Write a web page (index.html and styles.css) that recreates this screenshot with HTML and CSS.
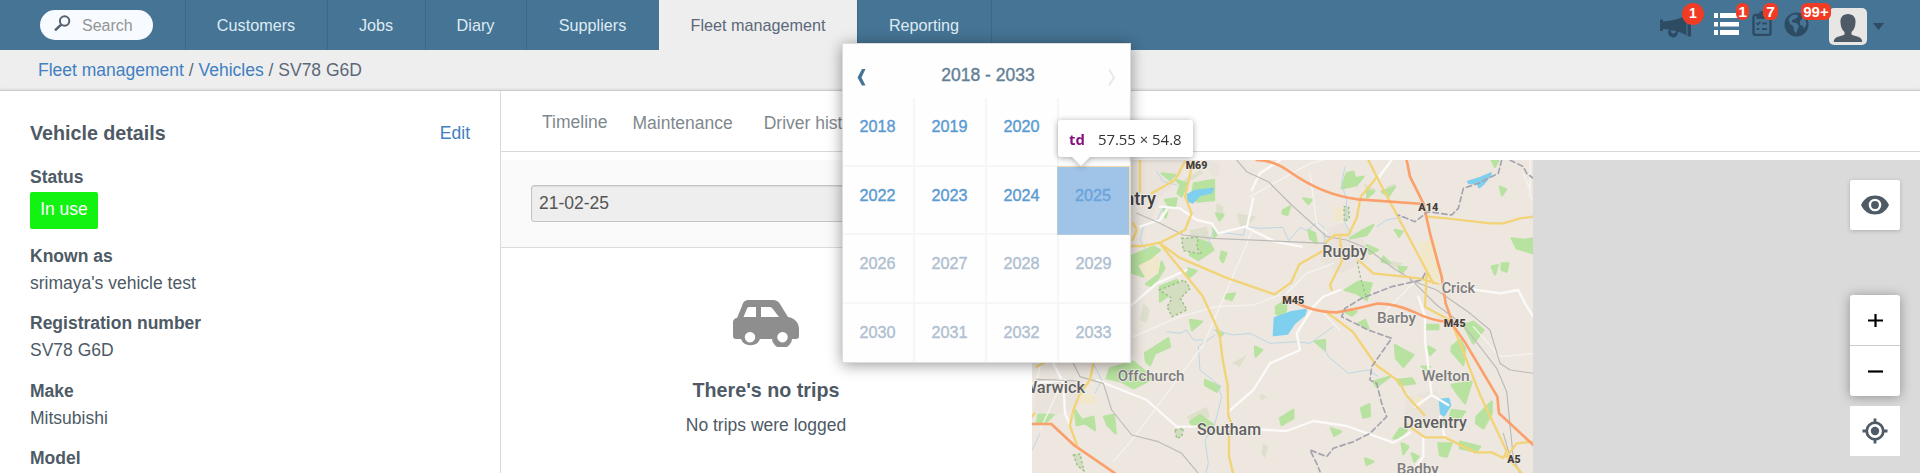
FILE: index.html
```html
<!DOCTYPE html>
<html lang="en">
<head>
<meta charset="utf-8">
<title>Vehicle SV78 G6D</title>
<link rel="stylesheet" href="styles.css">
</head>
<body>
<header class="topbar">
  <div class="search-wrap">
    <div class="search">
      <svg class="search-icon" viewBox="0 0 17 17"><circle cx="10.6" cy="6" r="4.7" fill="none" stroke="#56616f" stroke-width="2"/><path d="M7.2 9.6L1 15.4" stroke="#56616f" stroke-width="2.6"/></svg>
      <span>Search</span>
    </div>
  </div>
  <nav class="nav">
    <a class="nav-item n-customers">Customers</a>
    <a class="nav-item n-jobs">Jobs</a>
    <a class="nav-item n-diary">Diary</a>
    <a class="nav-item n-suppliers">Suppliers</a>
    <a class="nav-item n-fleet active">Fleet management</a>
    <a class="nav-item n-reporting">Reporting</a>
  </nav>
  <div class="tools">
    <span class="tool t-horn">
      <svg width="32" height="24" viewBox="0 0 32 24" fill="#2d4c64"><path d="M0 5.500h3v2C12 7 20 5 26.500 1v20.500C23 19.500 20 18.200 18 17.800a5 5 0 1 1-9-2.300L3 15v2H0zM27.500 1h3.500v21.500h-3.500z"/><path d="M11 16.200c-.5 4.200 4.800 4.500 5 .9z" fill="#467495"/></svg>
      <b class="badge round">1</b>
    </span>
    <span class="tool t-list">
      <svg width="25" height="23" viewBox="0 0 25 23" fill="#fff"><path d="M0 0h4v5H0zM6 0h19v5H6zM0 9h4v4.500H0zM6 9h19v4.500H6zM0 17h4v5H0zM6 17h19v5H6z"/></svg>
      <b class="badge">1</b>
    </span>
    <span class="tool t-clip">
      <svg width="20" height="25" viewBox="0 0 20 25" fill="none" stroke="#2d4c64"><rect x="1.500" y="4" width="17" height="20" rx="2" stroke-width="2.400"/><path d="M4.500 3H7a3 3 0 0 1 6 0h2.500v5h-11z" fill="#2d4c64" stroke="none"/><path d="M4.500 12l1.500 1.500L8.500 10.500M4.500 18h3M10 12.500h5M10 18h5" stroke-width="1.800"/></svg>
      <b class="badge">7</b>
    </span>
    <span class="tool t-globe">
      <svg width="25" height="25" viewBox="0 0 25 25"><circle cx="12.500" cy="12.500" r="12" fill="#2d4c64"/><path d="M4.500 7l3.500-4 5-.5 1 2-3 2.500-3 1 .5 2.500 4 .5 2.500 3-1.500 3.500-1.500 4-2-2.500-.5-4.500-3.500-2.500zM16 9l2.500-3 3 2 1 4-2 4.500-2-2.500-2.500-1.500z" fill="#467495"/></svg>
      <b class="badge wide">99+</b>
    </span>
    <span class="avatar">
      <svg width="30" height="29" viewBox="0 0 30 29" fill="#4e5a65"><path d="M15 0c5 0 8 3.500 7.500 8.500C22.300 12.500 21 16 18.500 18v2.500c3.500 2 10.500 1.500 10.800 7.500H.7c.3-6 7.300-5.500 10.800-7.500V18C9 16 7.700 12.500 7.500 8.500 7 3.500 10 0 15 0z"/></svg>
    </span>
    <svg class="caret" width="11" height="7" viewBox="0 0 11 7"><path d="M0 0h11L5.500 7z" fill="#2d4c64"/></svg>
  </div>
</header>

<div class="crumbs"><a>Fleet management</a> / <a>Vehicles</a> / <span>SV78 G6D</span></div>

<main class="main">
  <aside class="side">
    <div class="side-head"><h2>Vehicle details</h2><a>Edit</a></div>
    <dl>
      <dt>Status</dt><dd><span class="status">In use</span></dd>
      <dt>Known as</dt><dd>srimaya's vehicle test</dd>
      <dt>Registration number</dt><dd>SV78 G6D</dd>
      <dt>Make</dt><dd>Mitsubishi</dd>
      <dt>Model</dt>
    </dl>
  </aside>

  <section class="content">
    <div class="tabs"><a class="tab first">Timeline</a><a class="tab">Maintenance</a><a class="tab">Driver history</a></div>
    <div class="panes">
      <div class="trips">
        <div class="filter"><div class="date">21-02-25</div></div>
        <div class="empty">
          <svg class="car" width="66" height="47" viewBox="0 0 66 47"><path fill="#8e8e8e" fill-rule="evenodd" d="M16 0h24c3 0 5 1 7 4l8 13c7 1 11 6 11 12v7c0 2-1 3-3 3h-4a10 9 0 0 1-20 0H27a10 9 0 0 1-19 0H3c-2 0-3-1-3-3V22c0-2 2-4 4-4l5-12c1-4 3-6 7-6zM15.500 7q-1 0-1.500 1.500L10.500 17H23V7zM28 7v10h18l-6.500-8.500Q38.500 7 37 7zM17 32a5.200 5.200 0 1 0 .01 0zM49.500 32a5.200 5.200 0 1 0 .01 0z"/></svg>
          <h3>There's no trips</h3>
          <p>No trips were logged</p>
        </div>
      </div>
      <div class="map">
        <svg class="tiles" width="501" height="313" viewBox="6 30 1503 939">
          <rect x="6" y="30" width="1503" height="939" fill="#ede7e0"/>
          <g class="urban">
            <path d="M300 30h160l-10 60-60 50-30 80-60 20zM880 240l60-20 60 50 20 60-90 40-60-40zM1130 740l90-20 30 60-60 60-70-20zM20 690l110-10 20 80-100 50-40-30zM530 30l40 10-5 45-25-15z"/>
            <path d="M480 240l50-10 10 40-60 5zM340 460l20 20-10 40-20-10zM700 880l15 10-10 35-12-15zM560 160l20 10v40l-22-10zM620 190l60 10-20 20-30 10zM605 640l45-25-20 35zM1070 330l50 10-30 15zM470 800l60-30 10 30-50 20zM460 90l50-30 10 10-50 30zM1000 100l40 20-20 20zM1070 110l28-10-18 25zM690 730l20 10-18 14z" class="scrub"/>
          </g>
          <path class="sand" d="M1165 275l55-5 8 130-40-20zM320 330l60-20 10 50-40 30zM912 170l30 5-5 40-25-5zM150 730l45 5v30l-48-5zM1155 735l35 15-20 20-20-5z"/>
          <g class="green">
            <path d="M492 100l60-10v60l-50 5-15-25zM440 90l30 10-15 40-12-10 8-25zM395 70l40 5-15 15zM405 150l35-5-5 25-20-5zM760 180l20-10-8 25-15-5zM820 145l25 5-10 12zM835 240l20 10 5 30-20-15zM550 230l14 20-12 12zM558 190l22 5-12 16zM575 305l14 5-10 26-8-10zM585 435l30-5-10 20-18-5zM400 175l12 8-5 20z"/>
            <path d="M490 265l50 15 10 20-45 30-25-15zM300 320l70-30 20 10-30 25-40 20 20 35-42-15zM395 335l8 20-35 55-20-8 40-30zM475 355l25 8-20 18-10-10zM390 410l50-20 20 20-50 30-20 15zM480 510l36 5-30 25zM560 540l20 10-10 10zM675 590l22 10-20 20z"/>
            <path d="M345 610l70-45 5 25-45 20-15 35-12-10zM240 655l70-20 60 50-60 30-35-20-45-10zM525 690l45 20-10 15-35-20zM480 815l30-20 40 30-30 10-30-5zM25 795l45 0-20 20-30 5zM135 780l20 30 35-10 5 40-30-20-25 5zM222 800l30-5 5 55-25-25zM750 805l40-25v25l-35 20zM855 575l30-5v30zM903 835l30 10-20 12zM738 470l30-20v30l-15 20-15-10z"/>
            <path d="M950 70l20-5 5 20 25-5-20 25-45 10zM1010 120l22 5-20 17zM1055 125l40-15-20 30zM1095 240l22 5-10 15zM1000 240l30-15-20 30-50 10zM1010 285l34 15-25 12zM1060 320l20 20-25-5zM1105 350l25 2-15 18zM985 395l40 5-15 50-30-20-35-10zM945 485l35 0-15 12zM985 520l20-10 10 25zM1095 585l55 30-30 35-22-25zM1185 525h40v12h-35zM1195 590l20 10-15 15zM1175 650l25 0-8 12zM1300 525l30-10 30 25-30 40zM1265 590l25-20 15 25-5 50-35-40z"/>
            <path d="M1265 705l60-10-20 65-20-25zM1100 690l45-5 10 15-45 5zM1030 695l50-15-40 30zM993 775l25-12 2 35-20 5zM1340 800l45-45v35l-25 45-22-15zM1265 780l40 5-15 20-30-5zM1205 820l40-5-15 20zM1090 865l20-30 20 5-20 25zM1115 880l20 10-15 22zM1225 880h40l-15 40-20-5zM1290 875l60 15-10 15-50-10zM1145 910l20 10-12 15zM1005 925l25 10-20 10zM1445 265l40 5 25-5v45l-50-15zM1385 350l18-5-8 28zM1415 340l20 0-5 25-15-5zM1410 110l18 8-12 18zM1385 30h20l-10 20z"/>
          </g>
          <g class="dots">
            <path d="M455 265l50-3-5 30 15 20-55-10zM388 420l75-30 18 25-30 30 20 35-45 20-15-30 15-25zM942 170l14 0 2 35-15 10zM435 840l25-5-5 25-15 5zM130 915l20-3 12 50-20-15z"/>
            <path d="M982 335l10 50 15 50" fill="none"/>
          </g>
          <g class="water-line">
            <path d="M380 65l20 30 40 10M400 170l-20 45-40 15-10 40 25 40M530 290l20-45 90 10 8-25 40 5 70-3 18 40 35-40 20 10 30-25 20 15 5 55M945 50l-10 50 15 50-5 70 15 25M1040 230l30-20 55-10M410 545l40 5 20-10 20 30 30 0M550 540l60 15 50-5 60 30 80-5 40 5 70-50M875 580l20 40 60 50 60-10 30 20M555 555l-50 35 5 70 50 40 15 40-20 80-30 50 10 70-20 80M190 640l25 50-20 40M30 850l-24 50"/>
          </g>
          <g class="lake">
            <path d="M735 505l50-18 42-7-5 15-30 25-20 30-40 5zM474 135l22-12 52-6-5 10-35 8-20 22-12-5zM1315 95l35-10 32-14-20 28-14 12-5-12-25 0zM1230 750l25-3 5 18-18 30-8-5z"/>
          </g>
          <g class="minor">
            <path d="M390 170l60 5 50 35 45 10 20 30 80-20 90 45 80 15M650 235l20-90M330 230l60-20 20-30M300 470l80-70 90-40M750 30l-60 40-25 50M1310 415l100 15 55-10 20 40 25 40M1165 440l20 60v70l20 165 50 30M1155 770l50-35M930 420l-50 20-30 30-50 80 10 50-90 40-50 80-75 65M200 690l150 60 90 80h60M610 835l160 8 80-30 100 15 140 50 50-30M70 640l30 60 5 90 15 35M6 700l100-10M1180 860v60l-30 40M1230 800l15 65M1085 30l-45 60"/>
            <path class="thin" d="M670 235l-150 350-60 80-150 200-60 70M310 560l140-60 110-30 110-5 80-30M770 430l60-60 80-30M660 140l180-100 40-10M840 70l20 150 30 30M1500 30v110l9 10M1480 70l20 50M1150 400l-100 100M1330 530l80 90 100-10M30 650l-20 80M90 710l-60 130M870 480l60 60"/>
          </g>
          <g class="rail">
            <path d="M620 30l30 35 65 30 70 70 105 95 60 10 60 25 80 60 50 30 80 80 80 60 100 130 30 70 20 200 30 70M320 190l70 30 70 35 90 10 340 15M1140 390l80 30 100 70 60 50 30 100 30 20 70 10M130 640l20 40 70 20 25 80 60 75 80 20 70 35 50 60M20 688l130 5M1420 850l20 70 35 50"/>
          </g>
          <g class="road">
            <path d="M330 30v95M465 35l-30 55-70 40M490 30l-25 110 20 50-20 50-75 38-50 10h-40M310 220l10 20-12 30M388 278l60 45 140 60 145 50 50-35 25-55 70-40M388 278l40 50 90 110 50 110 10 80 15 80 2 90 12 30-10 20v70l12 51M890 275l25-20 40 0 25-50 12-65 50-60M1015 30l30 60 165 310M930 260l5 75-35 70 5 15M985 330l45 40 140 15 55 17M1190 375l-5 95 90 50M1190 200l60 5 130 15h40l50-15 40-5M888 485l80 60 70 100 70 50 20 40 55 60M1125 820l60 42h60l90 45h50l35 17 10-20-80-170-90-230M1430 920l30-40 50-5M1435 925l40 45M190 640l-10 50-30 40-20 50-10 45M120 828l20 55M6 800l8-10M20 650l25-14"/>
          </g>
          <g class="motor">
            <path d="M680 30q50 0 100 36 100 70 205 82l195 14M1130 30l10 50 40 80 20 90 35 130 12 80 25 70 35 50 95 160 5 50 103 95M770 442q70 45 150 45 60-10 120-26 50-2 110 24 60 30 105 30M6 822h58l70 65 120 82"/>
          </g>
          <path class="county" d="M1415 30l-10 40-60 30-45 15-15 60-20 20-70-10-40 30-50-20M1440 30l40 20 10 20 20 15M1185 370l-10 20-90 20-90 35-50 30-10 25 80 40 70 25-60 85-5 40 20 10 15 60 15 40-50 50-50 25-60 20-20 25-50-20 20 40 10 25"/>
          <g class="labels">
            <text x="252" y="165" textLength="126" lengthAdjust="spacingAndGlyphs" class="city">entry</text>
            <text x="877" y="321" textLength="135" lengthAdjust="spacingAndGlyphs" class="town">Rugby</text>
            <text x="1235" y="430" textLength="100" lengthAdjust="spacingAndGlyphs" class="village">Crick</text>
            <text x="1041" y="520" textLength="117" lengthAdjust="spacingAndGlyphs" class="village">Barby</text>
            <text x="1175" y="692" textLength="144" lengthAdjust="spacingAndGlyphs" class="village">Welton</text>
            <text x="1120" y="835" textLength="191" lengthAdjust="spacingAndGlyphs" class="town">Daventry</text>
            <text x="1100" y="972" textLength="126" lengthAdjust="spacingAndGlyphs" class="village">Badby</text>
            <text x="501" y="856" textLength="192" lengthAdjust="spacingAndGlyphs" class="town">Southam</text>
            <text x="263" y="692" textLength="200" lengthAdjust="spacingAndGlyphs" class="village">Offchurch</text>
            <text x="-22" y="729" textLength="187" lengthAdjust="spacingAndGlyphs" class="town">Warwick</text>
            <text x="467" y="58" textLength="65" lengthAdjust="spacingAndGlyphs" class="shield">M69</text>
            <text x="757" y="462" textLength="66" lengthAdjust="spacingAndGlyphs" class="shield">M45</text>
            <text x="1241" y="530" textLength="66" lengthAdjust="spacingAndGlyphs" class="shield">M45</text>
            <text x="1165" y="182" textLength="60" lengthAdjust="spacingAndGlyphs" class="shield">A14</text>
            <text x="1432" y="939" textLength="40" lengthAdjust="spacingAndGlyphs" class="shield">A5</text>
          </g>
        </svg>
        <div class="controls">
          <div class="ctl eye"><svg width="28" height="20" viewBox="0 0 28 20"><path fill="#4e5a65" d="M0 10C3 3.500 8 .5 14 .5S25 3.500 28 10c-3 6.500-8 9.500-14 9.500S3 16.500 0 10z"/><circle cx="14" cy="10" r="5.100" fill="#4e5a65" stroke="#fff" stroke-width="2.400"/></svg></div>
          <div class="zoom">
            <div class="zb"><svg width="15" height="15" viewBox="0 0 15 15"><path d="M0 7.500h15M7.500 1v13" stroke="#000" stroke-width="2.200"/></svg></div>
            <div class="zb"><svg width="15" height="15" viewBox="0 0 15 15"><path d="M0 7.500h15" stroke="#000" stroke-width="2.200"/></svg></div>
          </div>
          <div class="ctl loc"><svg width="26" height="26" viewBox="0 0 26 26"><circle cx="13" cy="13" r="8.300" fill="none" stroke="#4e5a65" stroke-width="2.800"/><circle cx="13" cy="13" r="4.200" fill="#4e5a65"/><path d="M13 .5v5M13 20.500v5M.5 13h5M20.500 13h5" stroke="#4e5a65" stroke-width="2.800"/></svg></div>
        </div>
      </div>
    </div>
  </section>
</main>

<div class="picker">
  <div class="picker-head">
    <svg width="9" height="17" viewBox="0 0 9 17"><path d="M5 0h3.500L4.500 8.500l4 8H5L.5 8.500z" fill="#467495"/></svg>
    <span>2018 - 2033</span>
    <svg width="9" height="17" viewBox="0 0 9 17"><path d="M1 .5l5 8-5 8" fill="none" stroke="#e6e8ea" stroke-width="2"/></svg>
  </div>
  <div class="years">
    <div>2018</div><div>2019</div><div>2020</div><div></div>
    <div>2022</div><div>2023</div><div>2024</div><div class="hit">2025</div>
    <div class="off">2026</div><div class="off">2027</div><div class="off">2028</div><div class="off">2029</div>
    <div class="off">2030</div><div class="off">2031</div><div class="off">2032</div><div class="off">2033</div>
  </div>
</div>
<div class="tip"><b>td</b><span>57.55 × 54.8</span></div>
</body>
</html>
```
FILE: styles.css
```css
* { box-sizing: border-box; }
body {
  margin: 0;
  width: 1920px;
  height: 473px;
  overflow: hidden;
  position: relative;
  background: #fff;
  font-family: "Liberation Sans", Arial, sans-serif;
  font-size: 17.5px;
  color: #4e5a65;
}
svg { display: block; }
h2, h3, p, dl, dd { margin: 0; }

/* top bar */
.topbar { display: flex; height: 50px; background: #467495; }
.search-wrap { width: 185px; padding: 10px 0 0 40px; }
.search {
  display: flex;
  align-items: center;
  width: 113px;
  height: 30px;
  padding-left: 14px;
  border-radius: 15px;
  background: #f7faff;
  color: #959595;
  font-size: 16px;
}
.search span { padding-top: 2px; }
.search-icon { width: 17px; height: 17px; margin: 0 11px 3px 0; }
.nav { display: flex; }
.nav-item {
  border-left: 1px solid #3c6886;
  padding-right: 1px;
  text-align: center;
  line-height: 51px;
  font-size: 16.2px;
  color: #deebf3;
}
.n-customers { width: 142px; }
.n-jobs { width: 98px; }
.n-diary { width: 101px; }
.n-suppliers { width: 133px; }
.n-fleet { width: 198px; }
.n-reporting { width: 135px; border-right: 1px solid #3c6886; }
.nav-item.active { background: #eee; color: #5c6879; border-color: #eee; }

.tools { display: flex; align-items: flex-start; margin-left: auto; width: 260px; }
.tool { position: relative; }
.t-horn { width: 54px; padding-top: 14px; }
.t-list { width: 38px; padding-top: 13px; }
.t-clip { width: 32px; padding-top: 11px; }
.t-globe { width: 45px; padding-top: 12px; }
.badge {
  position: absolute;
  top: 3px;
  left: 22px;
  min-width: 13px;
  height: 17px;
  border-radius: 6px;
  background: #f03c24;
  color: #fff;
  font-size: 15.5px;
  line-height: 17px;
  text-align: center;
}
.badge.round { width: 22px; height: 22px; border-radius: 11px; line-height: 21px; font-size: 14px; }
.t-clip .badge { left: 11px; width: 15px; }
.badge.wide { left: 17px; width: 30px; font-size: 15px; }
.avatar {
  display: flex;
  justify-content: center;
  width: 38px;
  height: 37px;
  margin-top: 8px;
  padding-top: 6px;
  border-radius: 5px;
  background: #e8e5e5;
}
.caret { margin: 23px 0 0 6px; }

/* breadcrumb */
.crumbs {
  height: 41px;
  padding-left: 38px;
  background: #eee;
  border-bottom: 1px solid #c5cccd;
  box-shadow: inset 0 -3px 3px -2px rgba(0, 0, 0, .08);
  line-height: 40px;
  color: #5c6879;
}
.crumbs a, .side-head a { color: #4180c1; }

/* sidebar */
.main { display: flex; height: 382px; }
.side { width: 501px; padding: 0 30px; border-right: 1px solid #dadada; }
.side-head { display: flex; justify-content: space-between; height: 74px; line-height: 84px; }
.side-head h2 { font-size: 19.7px; }
dt { font-weight: bold; line-height: 24px; }
dd { line-height: 30px; height: 27px; margin-bottom: 16.4px; }
dd:first-of-type { height: 39px; margin-bottom: 16px; padding-top: 3px; }
.status {
  display: block;
  width: 68px;
  height: 37px;
  border-radius: 2px;
  background: #12f312;
  color: #fff;
  line-height: 34px;
  text-align: center;
}

/* content */
.content { flex: 1; display: flex; flex-direction: column; }
.tabs { display: flex; gap: 31px; height: 61px; padding-left: 41px; border-bottom: 1px solid #d6d9da; color: #80888e; line-height: 64px; }
.tab { white-space: nowrap; }
.tab.first { line-height: 62px; margin-right: -6px; }
.panes { flex: 1; display: flex; margin-top: 8px; }
.trips { width: 531px; }
.filter { height: 88px; padding: 25px 0 0 30px; background: #fafafa; border-bottom: 1px solid #dcdcdc; }
.date {
  width: 470px;
  height: 37px;
  padding-left: 7px;
  border: 1px solid #c4c4c4;
  border-radius: 3px;
  background: #eee;
  box-shadow: inset 0 1px 1px rgba(0, 0, 0, .08);
  line-height: 35px;
  color: #555;
}
.empty { text-align: center; padding: 52px 1px 0 0; }
.car { margin: 0 auto; }
.empty h3 { margin-top: 30px; font-size: 19.7px; line-height: 26px; }
.empty p { margin-top: 10px; line-height: 24px; }

/* map */
.map { position: relative; flex: 1; background: #dadada; overflow: hidden; }
.urban { fill: #e9e3dc; }
.scrub { fill: #dfdfcd; }
.sand { fill: #f1e8cc; }
.green { fill: #b8e2a0; stroke: #b8e2a0; stroke-width: 7; stroke-linejoin: round; }
.dots { fill: #d3ddc0; stroke: #98bd80; stroke-width: 4; stroke-dasharray: 7 7; }
.water-line { fill: none; stroke: #bcd7e5; stroke-width: 3; stroke-linejoin: round; }
.lake { fill: #7fcfee; stroke: #7fcfee; stroke-width: 8; stroke-linejoin: round; }
.minor, .road, .motor, .rail, .county { fill: none; stroke-linejoin: round; stroke-linecap: round; }
.minor { stroke: #fbfaf8; stroke-width: 7; }
.minor .thin { stroke: #f6f3ef; stroke-width: 4; }
.rail { stroke: #bcbab7; stroke-width: 3.5; }
.road { stroke: #f2d375; stroke-width: 7; }
.motor { stroke: #fb9f6b; stroke-width: 8; }
.county { stroke: #a5a3af; stroke-width: 5; stroke-dasharray: 16 10; }
.labels { font-family: Roboto, sans-serif; paint-order: stroke; stroke: #f3efea; stroke-width: 5; stroke-linejoin: round; }
.city { font-size: 56px; font-weight: 500; fill: #414141; }
.town { font-size: 49px; font-weight: 500; fill: #606060; }
.village { font-size: 46px; font-weight: 500; fill: #7c7c7c; }
.shield { font-size: 33px; font-weight: 900; fill: #464038; stroke-width: 3; }
.controls { position: absolute; top: 20px; right: 20px; width: 50px; }
.ctl { display: flex; align-items: center; justify-content: center; width: 50px; height: 50px; background: #fff; }
.eye { border-radius: 2px; box-shadow: 0 1px 4px rgba(0, 0, 0, .2); }
.zoom { margin: 65px 0 10px; border-radius: 3px; background: #fff; box-shadow: 0 1px 12px rgba(0, 0, 0, .35); }
.zb { display: flex; align-items: center; justify-content: center; height: 50px; }
.zb:first-child { height: 51px; border-bottom: 1px solid #ccc; }

/* year picker */
.picker {
  position: absolute;
  left: 842px;
  top: 43px;
  width: 289px;
  height: 320px;
  border: 1px solid #ddd;
  background: #fefefe;
  box-shadow: 0 2px 14px rgba(0, 0, 0, .4);
  overflow: hidden;
}
.picker-head {
  display: flex;
  justify-content: space-between;
  height: 54px;
  padding: 25px 13px 0 14px;
  color: #648096;
  font-size: 17.5px;
  line-height: 12px;
  -webkit-text-stroke: .4px #648096;
}
.picker-head span { padding-left: 2px; }
.years {
  display: grid;
  grid-template-columns: repeat(4, 72px);
  grid-template-rows: 69px 68px 69px 59px;
}
.years div {
  padding: 16px 1px 0 0;
  border-right: 2px solid #f6f6f6;
  border-bottom: 2px solid #f6f6f6;
  color: #5c9bd1;
  font-size: 16.2px;
  line-height: 24px;
  text-align: center;
  -webkit-text-stroke: .4px currentColor;
}
.years div:nth-child(n+13) { border-bottom: 0; }
.years .off { color: #b0c0d1; }
.years .hit { background: #a0c4e8; color: #6ba3db; margin: -1px 1px 0 -2px; border: 1px solid #b6cbd9; border-top-color: #f4dcae; border-right-color: #f4dcae; }

/* inspector tooltip */
.tip {
  position: absolute;
  left: 1058px;
  top: 120px;
  display: flex;
  gap: 13px;
  width: 135px;
  height: 37px;
  padding-left: 11px;
  border-radius: 3px;
  background: #fff;
  filter: drop-shadow(0 1px 3px rgba(0, 0, 0, .35));
  font-family: "Open Sans", "Noto Sans", sans-serif;
  font-size: 14.9px;
  line-height: 39px;
  color: #333;
}
.tip b { color: #881280; }
.tip::after {
  content: "";
  position: absolute;
  left: 14px;
  top: 37px;
  border: 9px solid transparent;
  border-top-color: #fff;
  border-bottom: 0;
}
```
